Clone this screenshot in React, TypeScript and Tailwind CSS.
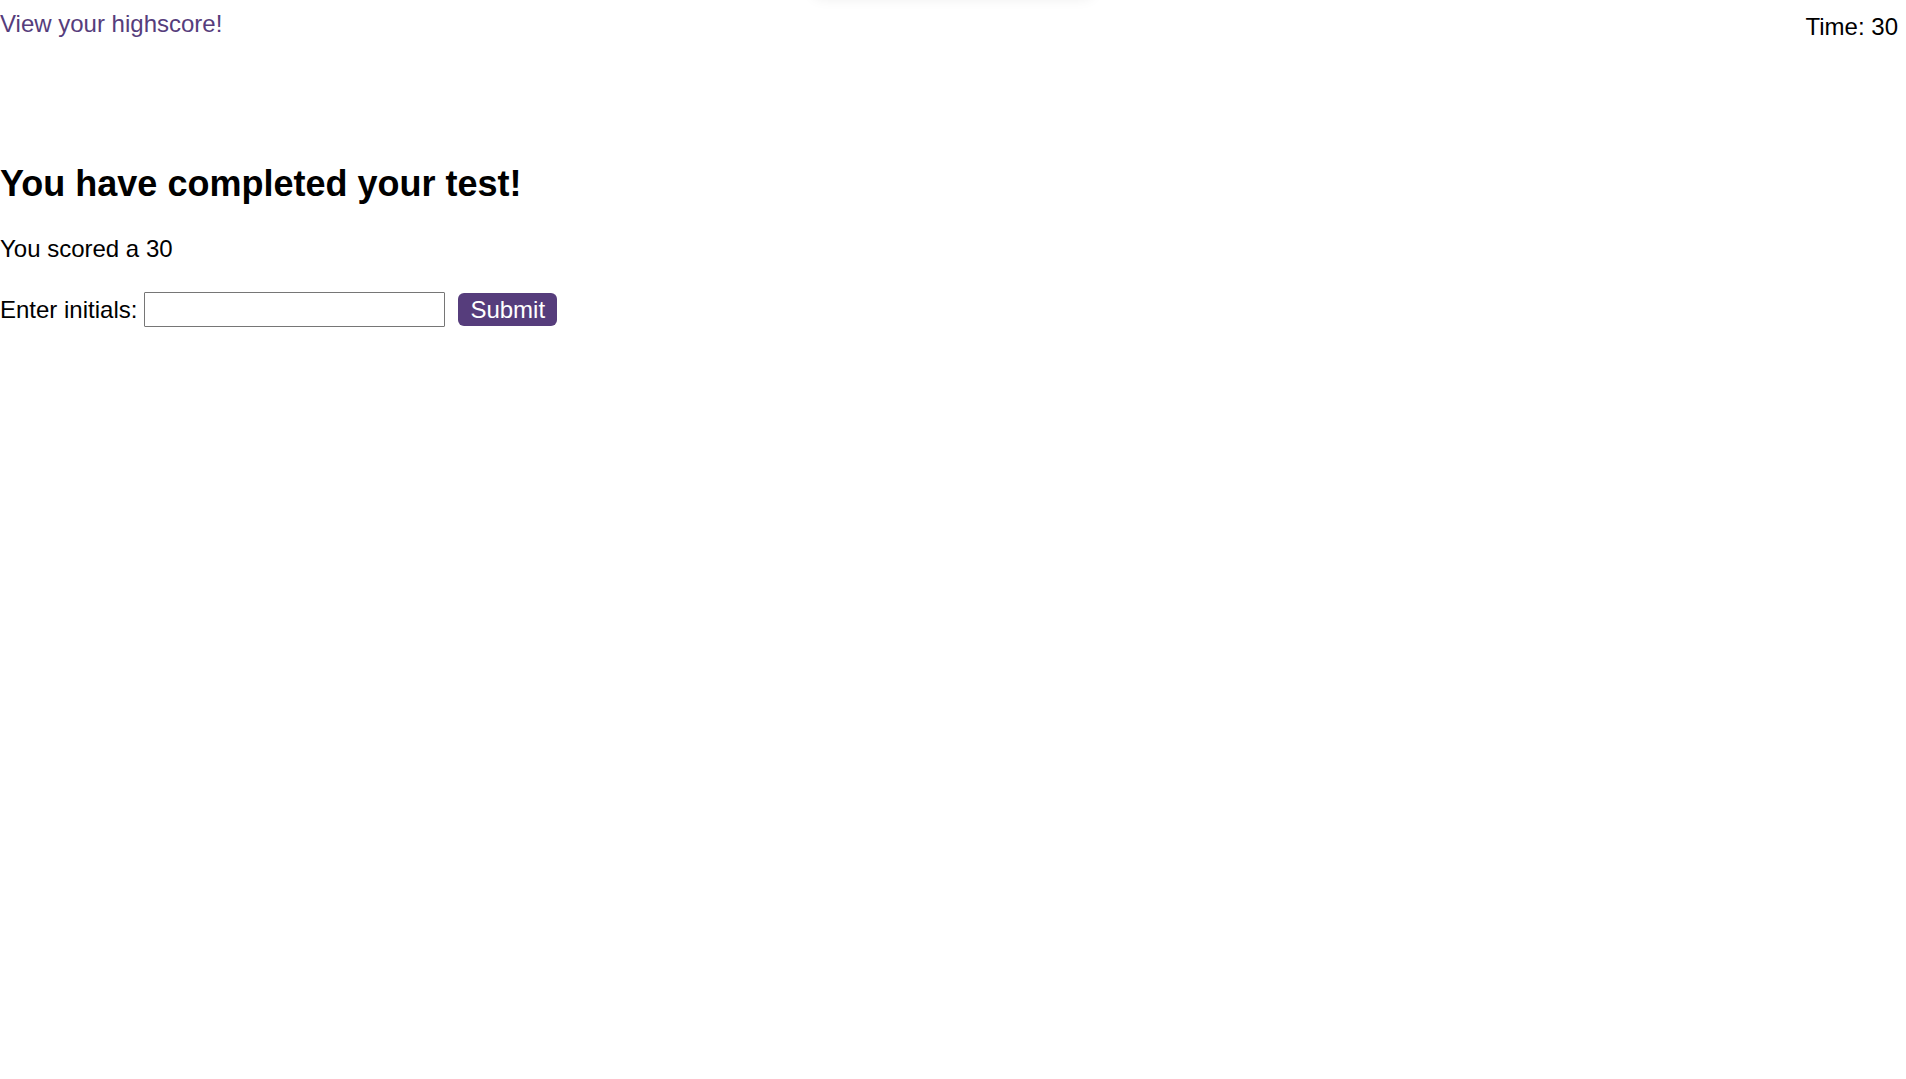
export default function App() {
  return (
    <div className="relative min-h-screen overflow-hidden bg-white font-['Liberation_Sans',Arial,sans-serif] text-2xl leading-7 text-black">
      <div aria-hidden="true" className="absolute -top-10 left-1/2 h-9 w-[280px] -translate-x-1/2 rounded-lg shadow-[0_2px_14px_rgba(0,0,0,0.08)]" />
      <header className="flex items-start justify-between">
        <a href="#highscore" className="mt-2.5 text-[#563d7c]">View your highscore!</a>
        <p className="mt-[13px] mr-2">Time: 30</p>
      </header>
      <main className="mt-[121px]">
        <h2 className="text-4xl leading-11 font-bold">You have completed your test!</h2>
        <p className="mt-[29px]">You scored a 30</p>
        <form className="mt-[29px] flex items-center" onSubmit={(e) => e.preventDefault()}>
          <label htmlFor="initials">Enter initials:</label>
          <input id="initials" type="text" className="ml-[7px] h-[35px] w-[301px] rounded-[1px] border border-[#767676] px-1" />
          <button type="submit" className="ml-[13px] h-[33px] rounded-md bg-[#563d7c] px-3 text-white">Submit</button>
        </form>
      </main>
    </div>
  );
}
